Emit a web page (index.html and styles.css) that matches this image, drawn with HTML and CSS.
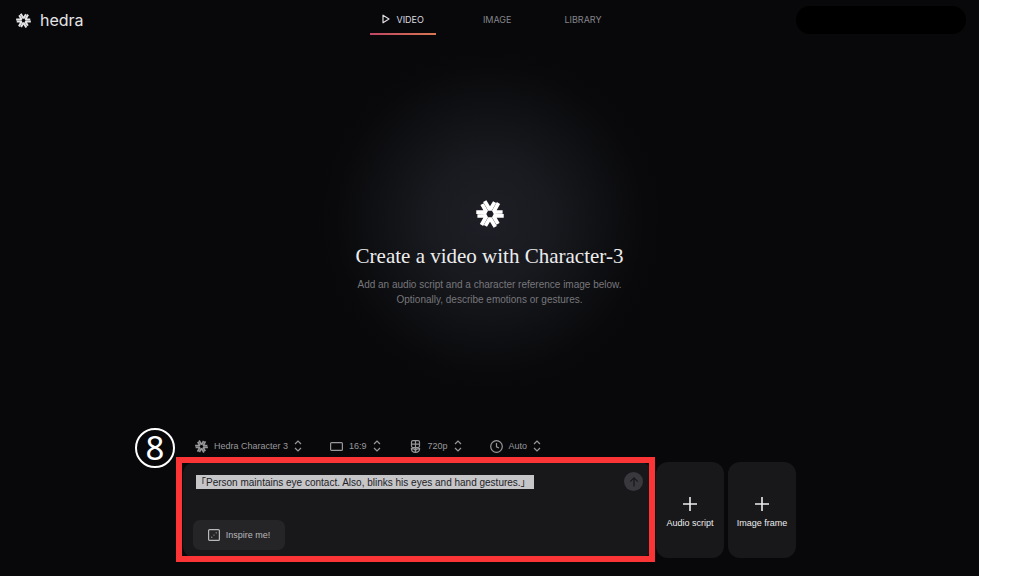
FILE: index.html
```html
<!DOCTYPE html>
<html lang="en">
<head>
    <meta charset="UTF-8">
    <meta name="viewport" content="width=device-width, initial-scale=1.0">
    <title>Hedra</title>
    <link rel="stylesheet" href="styles.css">
</head>
<body>
    <!-- shared shapes -->
    <svg class="defs" aria-hidden="true">
        <symbol id="logo" viewBox="0 0 24 24">
            <g fill="currentColor">
                <path id="arm" d="M10.5 9.2 6.1 1.8 8.9 .2 12 5.4 14.6 1 17.3 2.6 13.5 9.2Z"/>
                <use href="#arm" transform="rotate(60 12 12)"/>
                <use href="#arm" transform="rotate(120 12 12)"/>
                <use href="#arm" transform="rotate(180 12 12)"/>
                <use href="#arm" transform="rotate(240 12 12)"/>
                <use href="#arm" transform="rotate(300 12 12)"/>
            </g>
        </symbol>
        <symbol id="updown" viewBox="0 0 8 12">
            <path d="M1 4 4 1 7 4M1 8 4 11 7 8" fill="none" stroke="currentColor" stroke-width="1.2"/>
        </symbol>
        <symbol id="plus" viewBox="0 0 14 14">
            <path d="M7 0V14M0 7H14" fill="none" stroke="currentColor" stroke-width="1.6"/>
        </symbol>
    </svg>

    <div class="app">
        <header class="topbar">
            <a class="brand" href="#">
                <svg class="brand-icon"><use href="#logo"/></svg>
                <span>hedra</span>
            </a>
            <nav class="tabs">
                <a class="tab active" href="#">
                    <svg class="play" viewBox="0 0 8 10"><path d="M1 1.2 7 5 1 8.8Z" fill="none" stroke="currentColor" stroke-width="1.2" stroke-linejoin="round"/></svg>
                    VIDEO
                </a>
                <a class="tab" href="#">IMAGE</a>
                <a class="tab" href="#">LIBRARY</a>
            </nav>
            <div class="account"></div>
        </header>

        <main class="hero">
            <svg class="hero-icon"><use href="#logo"/></svg>
            <h1>Create a video with Character-3</h1>
            <p>Add an audio script and a character reference image below.<br>Optionally, describe emotions or gestures.</p>
        </main>

        <section class="composer">
            <div class="options">
                <button class="option" type="button">
                    <svg class="icon"><use href="#logo"/></svg>
                    Hedra Character 3
                    <svg class="updown"><use href="#updown"/></svg>
                </button>
                <button class="option" type="button">
                    <svg class="icon" viewBox="0 0 13 13"><rect x=".6" y="2.6" width="11.8" height="7.8" rx="1" fill="none" stroke="currentColor" stroke-width="1.2"/></svg>
                    16:9
                    <svg class="updown"><use href="#updown"/></svg>
                </button>
                <button class="option" type="button">
                    <svg class="icon" viewBox="0 0 13 13" fill="none" stroke="currentColor" stroke-width="1.2">
                        <rect x="2.5" y=".6" width="8" height="7" rx="1.5"/>
                        <path d="M6.5 .6V12.4M2.5 4.1H10.5M2.4 8.6C4.6 8.4 6 9.2 6.5 10.6 7 9.2 8.4 8.4 10.6 8.6 10.6 11.2 9 12.4 6.5 12.4S2.4 11.2 2.4 8.6Z"/>
                    </svg>
                    720p
                    <svg class="updown"><use href="#updown"/></svg>
                </button>
                <button class="option" type="button">
                    <svg class="icon" viewBox="0 0 13 13" fill="none" stroke="currentColor" stroke-width="1.2"><circle cx="6.5" cy="6.5" r="5.8"/><path d="M6.5 3V6.8L9 8"/></svg>
                    Auto
                    <svg class="updown"><use href="#updown"/></svg>
                </button>
            </div>

            <div class="panels">
                <form class="prompt">
                    <span class="step">8</span>
                    <div class="prompt-row">
                        <input class="prompt-text" type="text" aria-label="Prompt" value="「Person maintains eye contact. Also, blinks his eyes and hand gestures.」">
                        <button class="send" type="button" aria-label="Generate">
                            <svg viewBox="0 0 10 10"><path d="M5 9.5V1M1.2 4.6 5 .9 8.8 4.6" fill="none" stroke="currentColor" stroke-width="1.3"/></svg>
                        </button>
                    </div>
                    <button class="inspire" type="button">
                        <svg viewBox="0 0 12 12"><rect x=".6" y=".6" width="10.8" height="10.8" rx="1" fill="none" stroke="currentColor" stroke-width="1.2"/><g fill="currentColor"><circle cx="3.8" cy="8.2" r=".6"/><circle cx="6" cy="6" r=".6"/><circle cx="8.2" cy="3.8" r=".6"/></g></svg>
                        Inspire me!
                    </button>
                </form>
                <button class="card" type="button">
                    <svg><use href="#plus"/></svg>
                    Audio script
                </button>
                <button class="card" type="button">
                    <svg><use href="#plus"/></svg>
                    Image frame
                </button>
            </div>
        </section>
    </div>
</body>
</html>
```
FILE: styles.css
```css
* {
    box-sizing: border-box;
}

body {
    margin: 0;
    padding-right: 45px;
    background-color: #ffffff;
    font-family: "Liberation Sans", "Noto Sans CJK JP", sans-serif;
    font-size: 9px;
}

button,
input {
    font: inherit;
    color: inherit;
    border: none;
    background: none;
    padding: 0;
}

a {
    color: inherit;
    text-decoration: none;
}

svg {
    display: block;
    flex: none;
}

.defs {
    position: absolute;
    width: 0;
    height: 0;
}

.app {
    display: flex;
    flex-direction: column;
    min-height: 100vh;
    background: #08080a radial-gradient(circle at 50% 220px, #1e1f26 0, #191a1f 60px, #0e0f12 120px, #09090b 155px, #08080a 175px);
}

/* Header */
.topbar {
    display: grid;
    grid-template-columns: 1fr auto 1fr;
    align-items: center;
    height: 40px;
    padding: 0 13px 0 16px;
    font-family: "Inter", sans-serif;
}

.brand {
    display: flex;
    align-items: center;
    gap: 9px;
    color: #e4e4e6;
    font-size: 16px;
}

.brand-icon {
    width: 15px;
    height: 15px;
}

.tabs {
    display: flex;
    gap: 41px;
    margin-right: 4px;
}

.tab {
    display: flex;
    align-items: center;
    gap: 6px;
    height: 30px;
    padding: 0 6px;
    color: #85858a;
    border-bottom: 2px solid transparent;
}

.tab.active {
    padding: 0 12px;
    color: #dcdce0;
    border-image: linear-gradient(to right, #c04565, #d87850) 1;
}

.play {
    width: 8px;
    height: 10px;
}

.account {
    justify-self: end;
    width: 170px;
    height: 28px;
    border-radius: 14px;
    background-color: #000000;
}

/* Intro */
.hero {
    flex: 1;
    padding-top: 160px;
    text-align: center;
}

.hero-icon {
    width: 28px;
    height: 28px;
    margin: 0 auto;
    color: #ffffff;
}

h1 {
    margin: 14px 0 7px;
    color: #ededee;
    font-family: "Liberation Serif", serif;
    font-size: 21px;
    font-weight: normal;
    line-height: 28px;
}

.hero p {
    margin: 0;
    color: #77777c;
    font-size: 10px;
    line-height: 15px;
}

/* Prompt area */
.composer {
    width: 613px;
    max-width: 100%;
    margin: 0 auto;
    padding-bottom: 18px;
}

.options {
    display: flex;
    gap: 28px;
    padding: 0 12px 9px;
}

.option {
    display: flex;
    align-items: center;
    gap: 6px;
    height: 14px;
    color: #98989c;
}

.icon {
    width: 13px;
    height: 13px;
}

.updown {
    width: 8px;
    height: 12px;
}

.panels {
    display: flex;
    gap: 4px;
    height: 96px;
}

.prompt {
    position: relative;
    display: flex;
    flex: 1;
    flex-direction: column;
    justify-content: space-between;
    align-items: flex-start;
    padding: 10px 9px 8px 10px;
    border-radius: 12px;
    background-color: #18181a;
}

/* red frame round the prompt */
.prompt::after {
    content: "";
    position: absolute;
    inset: -5px -3px -4px -7px;
    border: 6px solid #fb3435;
    pointer-events: none;
}

.step {
    position: absolute;
    top: -34px;
    left: -48px;
    width: 40px;
    height: 40px;
    border: 2px solid #ffffff;
    border-radius: 50%;
    color: #ffffff;
    font-family: "Noto Sans", sans-serif;
    font-size: 33px;
    line-height: 36px;
    text-align: center;
}

.prompt-row {
    display: flex;
    justify-content: space-between;
    align-items: center;
    width: 100%;
    padding-left: 3px;
}

.prompt-text {
    width: 338px;
    height: 14px;
    background-color: #c6c6c9;
    color: #222226;
    font-size: 10px;
}

.send {
    display: grid;
    place-items: center;
    width: 19px;
    height: 19px;
    border-radius: 50%;
    background-color: #39393d;
    color: #1a1a1d;
}

.send svg {
    width: 10px;
    height: 10px;
}

.inspire {
    display: flex;
    align-items: center;
    justify-content: center;
    gap: 6px;
    width: 92px;
    height: 30px;
    border-radius: 7px;
    background-color: #252527;
    color: #b8b8bc;
}

.inspire svg {
    width: 12px;
    height: 12px;
}

.card {
    display: flex;
    flex-direction: column;
    align-items: center;
    justify-content: center;
    gap: 7px;
    width: 68px;
    padding-top: 4px;
    border-radius: 12px;
    background-color: #18181a;
    color: #ededee;
    white-space: nowrap;
}

.card svg {
    width: 14px;
    height: 14px;
}
```
